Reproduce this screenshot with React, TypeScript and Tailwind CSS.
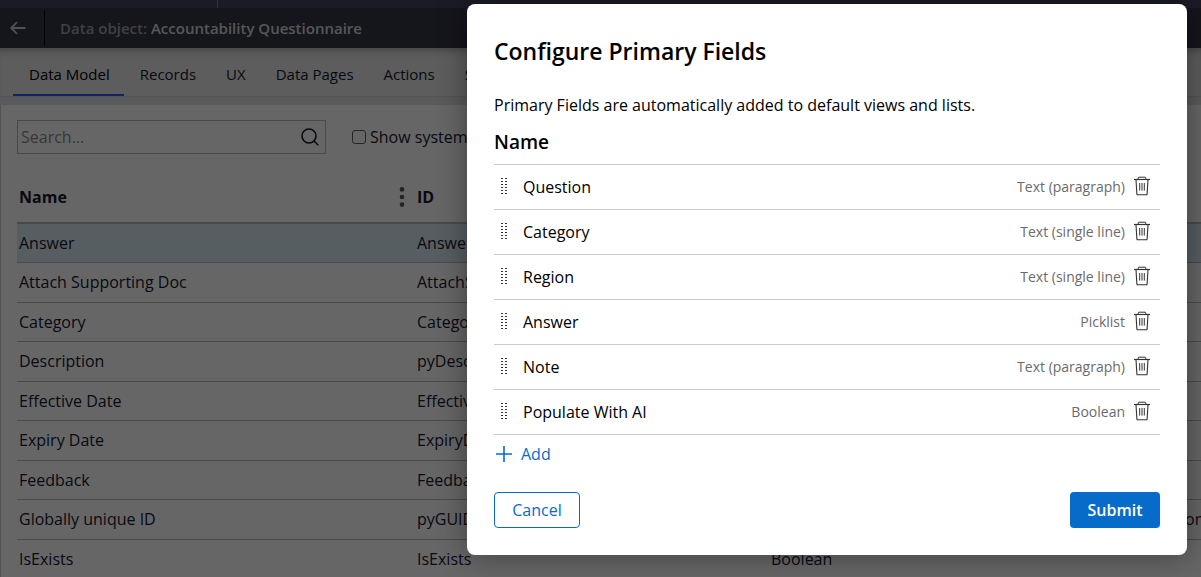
import React from 'react';

const tabs = ['Data Model', 'Records', 'UX', 'Data Pages', 'Actions', 'Settings'];

const rows = [
  { name: 'Answer', id: 'Answer', type: 'Picklist', origin: '' },
  { name: 'Attach Supporting Doc', id: 'AttachSupportingDoc', type: 'Attachment', origin: '' },
  { name: 'Category', id: 'Category', type: 'Text (single line)', origin: '' },
  { name: 'Description', id: 'pyDescription', type: 'Text (paragraph)', origin: '' },
  { name: 'Effective Date', id: 'EffectiveDate', type: 'Date only', origin: '' },
  { name: 'Expiry Date', id: 'ExpiryDate', type: 'Date only', origin: '' },
  { name: 'Feedback', id: 'Feedback', type: 'Text (paragraph)', origin: '' },
  { name: 'Globally unique ID', id: 'pyGUID', type: 'Text (single line)', origin: 'on' },
  { name: 'IsExists', id: 'IsExists', type: 'Boolean', origin: '' },
];

const fields = [
  { name: 'Question', type: 'Text (paragraph)' },
  { name: 'Category', type: 'Text (single line)' },
  { name: 'Region', type: 'Text (single line)' },
  { name: 'Answer', type: 'Picklist' },
  { name: 'Note', type: 'Text (paragraph)' },
  { name: 'Populate With AI', type: 'Boolean' },
];

function BackArrow() {
  return (
    <svg width="16" height="14" viewBox="0 0 16 14" fill="none" stroke="currentColor" strokeWidth="1.8" aria-hidden="true">
      <path d="M15.5 7H1.5M7 1.2L1.3 7L7 12.8" />
    </svg>
  );
}

function SearchIcon() {
  return (
    <svg width="18" height="18" viewBox="0 0 18 18" fill="none" stroke="currentColor" strokeWidth="1.6" aria-hidden="true">
      <circle cx="8" cy="8" r="7" />
      <path d="M13 13l4.3 4.3" />
    </svg>
  );
}

function ColumnDots() {
  return (
    <svg width="6" height="20" viewBox="0 0 6 20" fill="currentColor" aria-hidden="true">
      <circle cx="3" cy="2.4" r="2.3" />
      <circle cx="3" cy="10" r="2.3" />
      <circle cx="3" cy="17.6" r="2.3" />
    </svg>
  );
}

function DragHandle() {
  return (
    <svg width="7" height="16" viewBox="0 0 7 16" fill="none" stroke="currentColor" aria-hidden="true">
      <path d="M2 0V16M6 0V16" strokeDasharray="1 2" strokeWidth="1.6" />
    </svg>
  );
}

function TrashIcon() {
  return (
    <svg width="16" height="20" viewBox="0 0 16 20" fill="none" stroke="currentColor" aria-hidden="true">
      <path d="M0 3.5H16" strokeWidth="1.2" />
      <path d="M4.2 3.2V2Q4.2 1.2 5 1.2H11Q11.8 1.2 11.8 2V3.2" strokeWidth="1" />
      <path d="M2 3.8L2.9 18.1Q3 18.8 3.7 18.8H12.3Q13 18.8 13.1 18.1L14 3.8" strokeWidth="1.1" />
      <path d="M5.7 7V14.6M8 7V14.6M10.3 7V14.6" strokeWidth="1" />
    </svg>
  );
}

function PlusIcon() {
  return (
    <svg width="16" height="16" viewBox="0 0 16 16" fill="none" stroke="currentColor" strokeWidth="1.6" aria-hidden="true">
      <path d="M8 0V16M0 8H16" />
    </svg>
  );
}

function DataModelPage() {
  return (
    <div className="flex min-h-screen flex-col bg-[#dfe0e6] text-[#17172f]">
      <div className="flex h-2 bg-[#45455f]">
        <div className="w-[218px] border-r border-[#77778c]" />
      </div>
      <header className="flex h-10 items-center bg-[#353548]">
        <button type="button" aria-label="Back" className="flex h-9 w-[45px] items-center border-r border-black pl-[10px] text-[#c8c8cc]">
          <BackArrow />
        </button>
        <h1 className="pl-[15px] text-[15px] font-semibold text-[#a0a0a6]">
          Data object: <span className="text-[#d8d8dc]">Accountability Questionnaire</span>
        </h1>
      </header>
      <nav className="flex h-[49px] border-b border-[#d2d3d8] bg-[#e8e8eb] pl-[13px] text-[15px] shadow-[inset_0_8px_8px_-6px_rgba(0,0,0,0.3)]">
        {tabs.map((tab, i) => (
          <a
            key={tab}
            href="#"
            className={
              i === 0
                ? 'flex items-center border-b-2 border-[#2f55ff] pl-4 pr-3.5 pt-1.5 text-black'
                : 'flex items-center border-b-2 border-transparent pl-4 pr-3.5 pt-1.5'
            }
          >
            {tab}
          </a>
        ))}
      </nav>
      <main className="mt-2 flex-1 border-l border-[#cfd0d6] bg-white pl-4 pt-[15px]">
        <div className="flex items-center">
          <div className="flex h-[34px] w-[309px] items-center border border-[#b8b8b8] pl-[3px] pr-1.5">
            <input aria-label="Search" placeholder="Search..." className="min-w-0 flex-1 text-base outline-none placeholder:text-[#8a8a8a]" />
            <SearchIcon />
          </div>
          <label className="ml-[26px] flex items-center gap-1 whitespace-nowrap text-base">
            <input type="checkbox" className="size-[14px] appearance-none rounded-[3px] border border-[#606060]" />
            Show system fields
          </label>
        </div>
        <table className="mt-[18px] w-full table-fixed border-collapse text-left text-base">
          <colgroup>
            <col className="w-[398px]" />
            <col className="w-[354px]" />
            <col className="w-[414px]" />
            <col />
          </colgroup>
          <thead>
            <tr className="h-[51px] border-b-2 border-[#b8b8b8]">
              <th className="pl-0.5 font-bold">
                <div className="flex items-center justify-between pr-2.5">
                  Name
                  <span className="text-[#585858]"><ColumnDots /></span>
                </div>
              </th>
              <th className="pl-0.5 font-bold">ID</th>
              <th className="pl-0.5 font-bold">Type</th>
              <th />
            </tr>
          </thead>
          <tbody>
            {rows.map((row, i) => (
              <tr
                key={row.id}
                className={i === 0 ? 'h-[39px] border-b border-[#b8b8b8] bg-[#d9ebf6]' : 'border-b border-[#b8b8b8] odd:h-[39px] even:h-10'}
              >
                <td className="pl-0.5">{row.name}</td>
                <td className="pl-0.5">{row.id}</td>
                <td className="pl-0.5">{row.type}</td>
                <td className="pl-0.5">{row.origin}</td>
              </tr>
            ))}
          </tbody>
        </table>
      </main>
    </div>
  );
}

function PrimaryFieldsDialog() {
  return (
    <section role="dialog" aria-modal="true" aria-labelledby="dialog-title" className="w-[720px] rounded-lg bg-white p-[27px] pt-[31px] text-base text-black antialiased shadow-[0_0_30px_rgba(0,0,0,0.4)]">
      <h2 id="dialog-title" className="text-[23px] leading-8 font-semibold">Configure Primary Fields</h2>
      <p className="mt-[26px]">Primary Fields are automatically added to default views and lists.</p>
      <h3 className="mt-[13px] text-[19px] leading-6 font-semibold">Name</h3>
      <ul className="mt-[10px] border-t border-[#cacaca]">
        {fields.map((field) => (
          <li key={field.name} className="flex h-[45px] items-center border-b border-[#cacaca] pl-1.5 pr-[10px]">
            <span className="pb-0.5"><DragHandle /></span>
            <span className="ml-4 flex-1">{field.name}</span>
            <span className="text-sm text-[#6b6b6b]">{field.type}</span>
            <button type="button" aria-label={`Delete ${field.name}`} className="ml-[9px] pb-0.5 text-[#333]">
              <TrashIcon />
            </button>
          </li>
        ))}
      </ul>
      <button type="button" className="mt-[7px] flex items-center gap-[9px] pl-0.5 text-[#076bc9]">
        <PlusIcon />
        Add
      </button>
      <div className="mt-[26px] flex justify-between">
        <button type="button" className="h-9 w-[86px] rounded border border-[#076bc9] text-[#076bc9]">Cancel</button>
        <button type="button" className="h-9 w-[90px] rounded bg-[#076bc9] font-semibold text-white">Submit</button>
      </div>
    </section>
  );
}

export default function App() {
  return (
    <div className="relative h-screen overflow-hidden font-['Open_Sans',sans-serif]">
      <DataModelPage />
      <div className="absolute inset-0 flex items-start justify-end bg-black/60 pt-1 pr-[14px]">
        <PrimaryFieldsDialog />
      </div>
    </div>
  );
}
